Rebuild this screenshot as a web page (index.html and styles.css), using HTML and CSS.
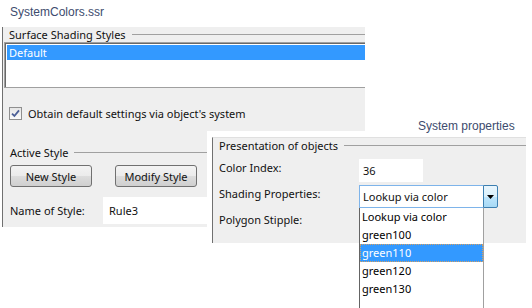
FILE: index.html
```html
<!DOCTYPE html>
<html lang="en">
<head>
    <meta charset="UTF-8">
    <title>SystemColors.ssr</title>
    <link rel="stylesheet" href="styles.css">
</head>
<body>
    <div class="screen">
        <div class="doc-title">SystemColors.ssr</div>

        <div class="left-panel">
            <div class="group-head list-head"><span>Surface Shading Styles</span></div>
            <div class="style-list">
                <div class="list-item selected">Default</div>
            </div>

            <label class="check-row">
                <span class="checkbox">
                    <svg width="9" height="9" viewBox="0 0 9 9"><path d="M1 4.6 L3.4 7 L8 1.4" fill="none" stroke="#4b5f97" stroke-width="1.8"/></svg>
                </span>
                Obtain default settings via object's system
            </label>

            <div class="group-head active-head"><span>Active Style</span></div>
            <div class="button-row">
                <button class="win-button">New Style</button>
                <button class="win-button">Modify Style</button>
            </div>
            <div class="name-row">
                <span class="name-label">Name of Style:</span>
                <div class="text-field name-field">Rule3</div>
            </div>
        </div>

        <div class="props-window">
            <div class="props-panel">
                <div class="group-head props-head"><span>Presentation of objects</span></div>
                <div class="props-grid">
                    <span class="prop-label">Color Index:</span>
                    <div class="text-field index-field">36</div>

                    <span class="prop-label">Shading Properties:</span>
                    <div class="combo">
                        <div class="combo-field">Lookup via color</div>
                        <div class="combo-button">
                            <svg width="7" height="4" viewBox="0 0 7 4"><path d="M0 0 H7 L3.5 4 Z" fill="#000"/></svg>
                        </div>
                        <div class="dropdown">
                            <div class="drop-item">Lookup via color</div>
                            <div class="drop-item">green100</div>
                            <div class="drop-item current">green110</div>
                            <div class="drop-item">green120</div>
                            <div class="drop-item">green130</div>
                        </div>
                    </div>

                    <span class="prop-label">Polygon Stipple:</span>
                    <div class="empty-cell"></div>
                </div>
            </div>
        </div>

        <div class="sys-label">System properties</div>
    </div>
</body>
</html>
```

FILE: styles.css
```css
body {
    margin: 0;
    background: #fff;
    font-family: "Noto Sans", "Open Sans", sans-serif;
    font-size: 11px;
    color: #111;
}
.screen {
    position: relative;
    width: 532px;
    height: 308px;
    overflow: hidden;
}
.doc-title {
    height: 27px;
    padding-left: 10px;
    box-sizing: border-box;
    padding-top: 5px;
    font-family: "Liberation Sans", Arial, sans-serif;
    font-size: 12px;
    line-height: 15px;
    color: #3d4b6e;
}

/* left dialog */
.left-panel {
    margin-left: 2px;
    width: 363px;
    height: 200px;
    box-sizing: border-box;
    border-left: 1px solid #707070;
    background: #efefef;
    padding-left: 7px;
    overflow: hidden;
}
.group-head {
    display: flex;
    align-items: center;
    height: 15px;
    line-height: 15px;
    white-space: nowrap;
}
.group-head::after {
    content: "";
    flex: 1;
    margin-left: 6px;
    border-top: 1px solid #a0a0a0;
}
.list-head {
    margin-left: -1px;
}
.style-list {
    margin-left: -6px;
    width: 420px;
    height: 46px;
    box-sizing: border-box;
    border: 1px solid #a0a0a0;
    box-shadow: inset 1px 1px #696969;
    background: #fff;
    padding: 2px 0 0 2px;
}
.list-item {
    height: 15px;
    line-height: 15px;
    padding-left: 2px;
}
.list-item.selected {
    background: #3399ff;
    color: #fff;
}
.check-row {
    display: flex;
    align-items: center;
    gap: 6px;
    margin-top: 17px;
    height: 16px;
    margin-left: -1px;
}
.checkbox {
    width: 11px;
    height: 11px;
    border: 1px solid #8f8f8f;
    background: linear-gradient(#e6e6e6, #fbfbfb);
    display: flex;
    align-items: center;
    justify-content: center;
}
.active-head {
    margin-top: 24px;
}
.button-row {
    display: flex;
    gap: 23px;
    margin-top: 5px;
}
.win-button {
    width: 82px;
    height: 22px;
    border: 1px solid #707070;
    border-radius: 3px;
    background: linear-gradient(#f3f3f3 0%, #ebebeb 50%, #dddddd 51%, #cfcfcf 100%);
    font-family: inherit;
    font-size: 11px;
    color: #111;
    padding: 0;
}
.name-row {
    display: flex;
    align-items: center;
    margin-top: 10px;
}
.name-label {
    width: 93px;
}
.text-field {
    background: #fff;
    box-sizing: border-box;
}
.name-field {
    width: 140px;
    height: 27px;
    line-height: 27px;
    padding-left: 6px;
}

/* right dialog */
.sys-label {
    position: absolute;
    left: 418px;
    top: 119px;
    font-family: "Liberation Sans", Arial, sans-serif;
    font-size: 12px;
    line-height: 15px;
    color: #3d4b6e;
}
.props-window {
    position: absolute;
    left: 207px;
    top: 131px;
    width: 325px;
    height: 177px;
    background: #fff;
    padding: 6px 6px 0 5px;
    box-sizing: border-box;
}
.props-panel {
    height: 106px;
    background: #efefef;
    border-left: 1px solid #707070;
    border-top: 1px solid #e0e0e0;
    box-sizing: border-box;
    padding: 0 0 0 6px;
}
.props-grid {
    display: grid;
    grid-template-columns: 140px auto;
    grid-auto-rows: 23px;
    row-gap: 3px;
    margin-top: 6px;
    justify-items: start;
}
.prop-label {
    line-height: 16px;
    margin-top: 1px;
}
.index-field {
    width: 64px;
    height: 23px;
    line-height: 23px;
    padding-left: 4px;
}
.combo {
    position: relative;
    display: flex;
    height: 23px;
}
.combo-field {
    width: 124px;
    box-sizing: border-box;
    background: #fff;
    border: 1px solid #7eb4ea;
    border-right: none;
    line-height: 21px;
    padding-left: 3px;
}
.combo-button {
    width: 15px;
    box-sizing: border-box;
    border: 1px solid #3c7fb1;
    border-radius: 0 2px 2px 0;
    background: linear-gradient(#eaf6fd 0%, #d9f0fc 50%, #bee6fd 51%, #a7d9f5 100%);
    display: flex;
    align-items: center;
    justify-content: center;
}
.dropdown {
    position: absolute;
    left: 0;
    top: 23px;
    width: 125px;
    height: 110px;
    box-sizing: border-box;
    background: #fff;
    border-left: 1px solid #646464;
    border-right: 1px solid #a0a0a0;
}
.drop-item {
    height: 18px;
    line-height: 18px;
    padding-left: 2px;
    color: #000;
}
.drop-item.current {
    background: #3399ff;
    color: #fff;
    outline: 1px dotted #d8a060;
    outline-offset: -1px;
}
```
